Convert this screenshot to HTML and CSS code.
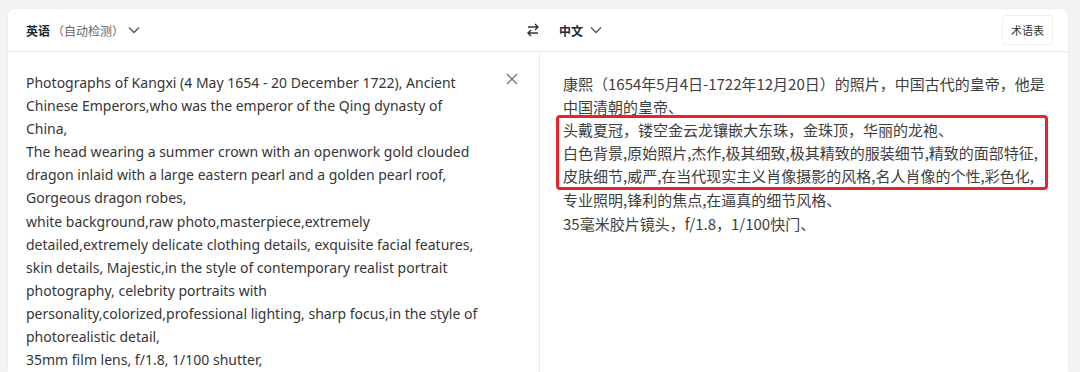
FILE: index.html
```html
<!doctype html>
<html lang="zh">
<head>
    <meta charset="utf-8" />
    <title>翻译</title>
    <link rel="stylesheet" href="styles.css">
</head>
<body>
    <div class="Card">
        <div class="Head">
            <div class="Head_Side">
                <span class="Lang">英语</span>
                <span class="Detect">（自动检测）</span>
                <svg class="Chevron" width="12" height="12" viewBox="0 0 12 12"><path d="M1 3.5 L6 8.5 L11 3.5" fill="none" stroke="#555" stroke-width="1.3"/></svg>
            </div>
            <svg class="Swap" width="16" height="16" viewBox="0 0 16 16">
                <path d="M3 5 H13 M10 2 L13 5 L10 8" fill="none" stroke="#333" stroke-width="1.4"/>
                <path d="M13 11 H3 M6 8 L3 11 L6 14" fill="none" stroke="#333" stroke-width="1.4"/>
            </svg>
            <div class="Head_Side Head_Right">
                <span class="Lang">中文</span>
                <svg class="Chevron" width="12" height="12" viewBox="0 0 12 12"><path d="M1 3.5 L6 8.5 L11 3.5" fill="none" stroke="#555" stroke-width="1.3"/></svg>
                <button class="Glossary">术语表</button>
            </div>
        </div>
        <div class="Body">
            <div class="Pane Pane_Source">
                <p class="Text">Photographs of Kangxi (4 May 1654 - 20 December 1722), Ancient<br>Chinese Emperors,who was the emperor of the Qing dynasty of<br>China,<br>The head wearing a summer crown with an openwork gold clouded<br>dragon inlaid with a large eastern pearl and a golden pearl roof,<br>Gorgeous dragon robes,<br>white background,raw photo,masterpiece,extremely<br>detailed,extremely delicate clothing details, exquisite facial features,<br>skin details, Majestic,in the style of contemporary realist portrait<br>photography, celebrity portraits with<br>personality,colorized,professional lighting, sharp focus,in the style of<br>photorealistic detail,<br>35mm film lens, f/1.8, 1/100 shutter,</p>
                <svg class="Clear" width="14" height="14" viewBox="0 0 14 14"><path d="M2 2 L12 12 M12 2 L2 12" fill="none" stroke="#777" stroke-width="1.3"/></svg>
            </div>
            <div class="Pane Pane_Target">
                <div class="Text Text_Zh">
                    <div>康熙（1654年5月4日-1722年12月20日）的照片，中国古代的皇帝，他是</div>
                    <div>中国清朝的皇帝、</div>
                    <div class="Mark">
                        <div>头戴夏冠，镂空金云龙镶嵌大东珠，金珠顶，华丽的龙袍、</div>
                        <div>白色背景,原始照片,杰作,极其细致,极其精致的服装细节,精致的面部特征,</div>
                        <div>皮肤细节,威严,在当代现实主义肖像摄影的风格,名人肖像的个性,彩色化,</div>
                    </div>
                    <div>专业照明,锋利的焦点,在逼真的细节风格、</div>
                    <div>35毫米胶片镜头，f/1.8，1/100快门、</div>
                </div>
            </div>
        </div>
    </div>
</body>
</html>
```

FILE: styles.css
```css
body {
    margin: 0;
    background: #f3f3f3;
    font-family: "Noto Sans", "Noto Sans CJK SC", sans-serif;
    color: #363636;
}
.Card {
    margin: 9px 12px 0 8px;
    background: #fff;
    border-radius: 6px 6px 0 0;
    box-shadow: 0 0 2px rgba(0, 0, 0, 0.08);
    height: 363px;
    overflow: hidden;
}
.Head {
    display: flex;
    align-items: center;
    height: 42px;
    border-bottom: 1px solid #ebebeb;
}
.Head_Side {
    flex: 1;
    display: flex;
    align-items: center;
    padding-left: 18px;
}
.Head_Right {
    padding-left: 18px;
    padding-right: 15px;
}
.Lang {
    font-family: "Noto Sans CJK SC", sans-serif;
    font-weight: 700;
    font-size: 12px;
    color: #222b38;
}
.Detect {
    font-family: "Noto Sans CJK SC", sans-serif;
    font-size: 12px;
    color: #666;
    margin-left: 2px;
}
.Chevron {
    margin-left: 4px;
}
.Head_Right .Chevron {
    margin-left: 7px;
}
.Swap {
    margin: 0 0 0 5px;
}
.Glossary {
    margin-left: auto;
    font-family: "Noto Sans CJK SC", sans-serif;
    font-size: 11px;
    color: #333;
    background: #fff;
    border: 1px solid #f0f0f0;
    border-radius: 3px;
    height: 30px;
    padding: 0 8px;
}
.Body {
    display: flex;
    height: 100%;
}
.Pane {
    flex: 1;
    position: relative;
}
.Pane_Source {
    border-right: 1px solid #ebebeb;
    padding: 19px 0 0 18px;
}
.Pane_Target {
    padding: 20px 0 0 15px;
}
.Text {
    margin: 0;
    font-size: 14px;
    line-height: 23.1px;
    white-space: nowrap;
}
.Text_Zh {
    font-family: "Noto Sans CJK SC", sans-serif;
    font-size: 15px;
    color: #3e3e3e;
}
.Text_Zh > div {
    padding-left: 8px;
}
.Text_Zh > .Mark {
    border: 3px solid #e8242a;
    border-radius: 4px;
    margin: -3px 20px -2px 1px;
    padding-left: 0;
}
.Mark > div {
    padding-left: 4px;
}
.Clear {
    position: absolute;
    top: 20px;
    right: 20px;
}
```
